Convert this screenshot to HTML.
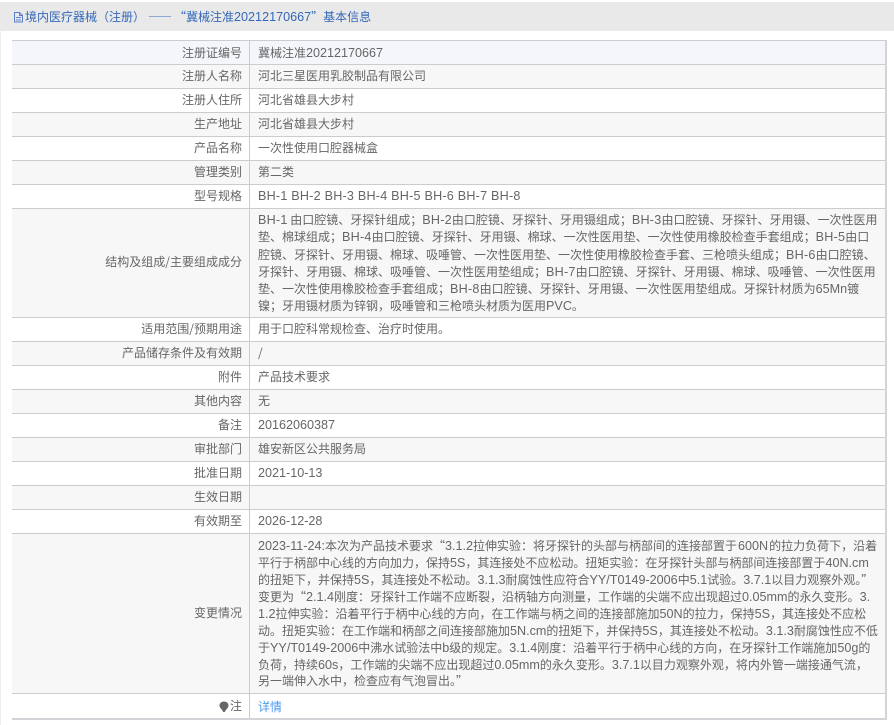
<!DOCTYPE html>
<html lang="zh-CN">
<head>
<meta charset="utf-8">
<style>
html,body{margin:0;padding:0;background:#fff;}
body{width:894px;height:725px;overflow:hidden;position:relative;font-family:"Noto Sans CJK SC","WenQuanYi Zen Hei",sans-serif;font-size:12px;color:#666;}
#hd{position:absolute;left:0;top:2px;width:894px;height:29px;background:#e9e9e9;}
#hdt{position:absolute;left:25px;top:8px;line-height:18px;height:18px;color:#3568b8;white-space:nowrap;font-size:12px;}
#lb{position:absolute;left:0;top:31px;width:1px;height:694px;background:#eee;}
.r{position:absolute;left:12px;width:873px;box-sizing:border-box;border-top:1px solid #ccc;}
.g{background:#f7f7f7;}
.l,.t{position:absolute;line-height:18px;height:18px;white-space:nowrap;}
.l{right:652px;text-align:right;}
.t{left:258px;}
i{font-style:normal;font-family:"Liberation Sans",sans-serif;font-size:12.6px;}
i.b{letter-spacing:.22px;}
#v{position:absolute;left:249px;top:40px;width:1px;height:678px;background:#ccc;}
#rb{position:absolute;left:885px;top:40px;width:2px;height:680px;background:#d4d4d8;}
#bb{position:absolute;left:12px;top:718px;width:875px;height:2px;background:#d4d4d8;}
</style>
</head>
<body>
<div id="hd"></div>
<div id="lb"></div>
<svg style="position:absolute;left:13px;top:10px" width="11" height="13" viewBox="0 0 11 13"><path d="M1.5 2.5h5l3 3v6.500h-8zM6.500 2.500v3h3M3 7.500h5M3 10h5" fill="none" stroke="#5a7fcc" stroke-width="1"/></svg>
<div id="hdt">境内医疗器械（注册）<span style="margin-left:3px;margin-right:1px;letter-spacing:1px">——</span>“冀械注准<i>20212170667</i>”基本信息</div>

<div class="r" style="top:40px;height:24px;background:#f4f6fb"></div>
<div class="r g" style="top:64px;height:24px"></div>
<div class="r" style="top:88px;height:24px"></div>
<div class="r g" style="top:112px;height:24px"></div>
<div class="r" style="top:136px;height:24px"></div>
<div class="r g" style="top:160px;height:24px"></div>
<div class="r" style="top:184px;height:24px"></div>
<div class="r g" style="top:208px;height:109px"></div>
<div class="r" style="top:317px;height:24px"></div>
<div class="r g" style="top:341px;height:24px"></div>
<div class="r" style="top:365px;height:24px"></div>
<div class="r g" style="top:389px;height:24px"></div>
<div class="r" style="top:413px;height:24px"></div>
<div class="r g" style="top:437px;height:24px"></div>
<div class="r" style="top:461px;height:24px"></div>
<div class="r g" style="top:485px;height:24px"></div>
<div class="r" style="top:509px;height:24px"></div>
<div class="r g" style="top:533px;height:160px"></div>
<div class="r" style="top:693px;height:25px"></div>
<div id="v"></div>
<div id="rb"></div>
<div id="bb"></div>

<div class="l" style="top:44px">注册证编号</div><div class="t" style="top:44px">冀械注准<i>20212170667</i></div>
<div class="l" style="top:67px">注册人名称</div><div class="t" style="top:67px">河北三星医用乳胶制品有限公司</div>
<div class="l" style="top:91px">注册人住所</div><div class="t" style="top:91px">河北省雄县大步村</div>
<div class="l" style="top:115px">生产地址</div><div class="t" style="top:115px">河北省雄县大步村</div>
<div class="l" style="top:139px">产品名称</div><div class="t" style="top:139px">一次性使用口腔器械盒</div>
<div class="l" style="top:163px">管理类别</div><div class="t" style="top:163px">第二类</div>
<div class="l" style="top:187px">型号规格</div><div class="t" style="top:187px"><i class="b">BH-1 BH-2 BH-3 BH-4 BH-5 BH-6 BH-7 BH-8</i></div>

<div class="l" style="top:253px">结构及组成/主要组成成分</div>
<div class="t" style="top:211px"><i class="b">BH-1</i> 由口腔镜、牙探针组成；<i class="b">BH-2</i>由口腔镜、牙探针、牙用镊组成；<i class="b">BH-3</i>由口腔镜、牙探针、牙用镊、一次性医用</div>
<div class="t" style="top:228px">垫、棉球组成；<i class="b">BH-4</i>由口腔镜、牙探针、牙用镊、棉球、一次性医用垫、一次性使用橡胶检查手套组成；<i class="b">BH-5</i>由口</div>
<div class="t" style="top:246px">腔镜、牙探针、牙用镊、棉球、吸唾管、一次性医用垫、一次性使用橡胶检查手套、三枪喷头组成；<i class="b">BH-6</i>由口腔镜、</div>
<div class="t" style="top:263px">牙探针、牙用镊、棉球、吸唾管、一次性医用垫组成；<i class="b">BH-7</i>由口腔镜、牙探针、牙用镊、棉球、吸唾管、一次性医用</div>
<div class="t" style="top:280px">垫、一次性使用橡胶检查手套组成；<i class="b">BH-8</i>由口腔镜、牙探针、牙用镊、一次性医用垫组成。牙探针材质为<i>65Mn</i>镀</div>
<div class="t" style="top:297px">镍；牙用镊材质为锌钢，吸唾管和三枪喷头材质为医用<i>PVC</i>。</div>

<div class="l" style="top:320px">适用范围/预期用途</div><div class="t" style="top:320px">用于口腔科常规检查、治疗时使用。</div>
<div class="l" style="top:344px">产品储存条件及有效期</div><div class="t" style="top:344px">/</div>
<div class="l" style="top:368px">附件</div><div class="t" style="top:368px">产品技术要求</div>
<div class="l" style="top:392px">其他内容</div><div class="t" style="top:392px">无</div>
<div class="l" style="top:416px">备注</div><div class="t" style="top:416px"><i>20162060387</i></div>
<div class="l" style="top:440px">审批部门</div><div class="t" style="top:440px">雄安新区公共服务局</div>
<div class="l" style="top:464px">批准日期</div><div class="t" style="top:464px"><i>2021-10-13</i></div>
<div class="l" style="top:488px">生效日期</div>
<div class="l" style="top:512px">有效期至</div><div class="t" style="top:512px"><i>2026-12-28</i></div>

<div class="l" style="top:604px">变更情况</div>
<div class="t" style="top:537px"><i>2023-11-24:</i>本次为产品技术要求“<i>3.1.2</i>拉伸实验：将牙探针的头部与柄部间的连接部置于<i style="margin-left:1px;margin-right:1px">600N</i>的拉力负荷下，沿着</div>
<div class="t" style="top:554px">平行于柄部中心线的方向加力，保持<i>5S</i>，其连接处不应松动。扭矩实验：在牙探针头部与柄部间连接部置于<i style="margin-right:1px">40N.cm</i></div>
<div class="t" style="top:571px">的扭矩下，并保持<i>5S</i>，其连接处不松动。<i>3.1.3</i>耐腐蚀性应符合<i>YY/T0149-2006</i>中<i>5.1</i>试验。<i>3.7.1</i>以目力观察外观。”</div>
<div class="t" style="top:588px">变更为“<i>2.1.4</i>刚度：牙探针工作端不应断裂，沿柄轴方向测量，工作端的尖端不应出现超过<i>0.05mm</i>的永久变形。<i>3.</i></div>
<div class="t" style="top:605px"><i>1.2</i>拉伸实验：沿着平行于柄中心线的方向，在工作端与柄之间的连接部施加<i>50N</i>的拉力，保持<i>5S</i>，其连接处不应松</div>
<div class="t" style="top:622px">动。扭矩实验：在工作端和柄部之间连接部施加<i>5N.cm</i>的扭矩下，并保持<i>5S</i>，其连接处不松动。<i>3.1.3</i>耐腐蚀性应不低</div>
<div class="t" style="top:639px">于<i>YY/T0149-2006</i>中沸水试验法中<i>b</i>级的规定。<i>3.1.4</i>刚度：沿着平行于柄中心线的方向，在牙探针工作端施加<i>50g</i>的</div>
<div class="t" style="top:656px">负荷，持续<i>60s</i>，工作端的尖端不应出现超过<i>0.05mm</i>的永久变形。<i>3.7.1</i>以目力观察外观，将内外管一端接通气流，</div>
<div class="t" style="top:672px">另一端伸入水中，检查应有气泡冒出。”</div>

<div class="l" style="top:697px">注</div>
<svg style="position:absolute;left:219px;top:701px" width="10" height="12" viewBox="0 0 10 12"><path d="M5 0.500C2.200 0.500 0.500 2.400 0.500 4.600C0.500 7 3.200 8.200 4.200 11H5.800C6.800 8.200 9.500 7 9.500 4.600C9.500 2.400 7.800 0.500 5 0.500Z" fill="#666"/></svg>
<div class="t" style="top:698px;color:#4a9bf0;font-size:12px">详情</div>
</body>
</html>
